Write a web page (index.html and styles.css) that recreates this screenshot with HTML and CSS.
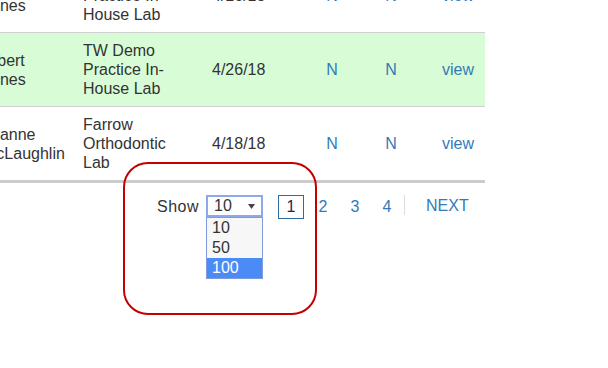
FILE: index.html
```html
<!DOCTYPE html>
<html>
<head>
<meta charset="utf-8">
<link rel="stylesheet" href="styles.css">
</head>
<body>
<div class="page">
  <div class="table-wrap">
    <table class="orders">
      <colgroup>
        <col class="w1"><col class="w2"><col class="w3"><col class="w4"><col class="w5"><col class="w6">
      </colgroup>
      <tr>
        <td class="name">Sarah Jones</td>
        <td class="lab">TW Demo Practice In-House Lab</td>
        <td class="date">4/16/18</td>
        <td class="flag">N</td>
        <td class="flag">N</td>
        <td class="link">view</td>
      </tr>
      <tr class="hl">
        <td class="name">Albert Jones</td>
        <td class="lab">TW Demo Practice In-House Lab</td>
        <td class="date">4/26/18</td>
        <td class="flag">N</td>
        <td class="flag">N</td>
        <td class="link">view</td>
      </tr>
      <tr class="last">
        <td class="name">Joanne McLaughlin</td>
        <td class="lab">Farrow Orthodontic Lab</td>
        <td class="date">4/18/18</td>
        <td class="flag">N</td>
        <td class="flag">N</td>
        <td class="link">view</td>
      </tr>
    </table>
  </div>

  <div class="pager">
    <span class="show">Show</span>
    <div class="select">
      <span class="sel-val">10</span>
      <svg class="arrow" width="7" height="5" viewBox="0 0 7 5"><polygon points="0,0 7,0 3.5,5" fill="#444"/></svg>
      <div class="options">
        <div class="opt">10</div>
        <div class="opt">50</div>
        <div class="opt active">100</div>
      </div>
    </div>
    <span class="pg current">1</span>
    <span class="pg">2</span>
    <span class="pg">3</span>
    <span class="pg">4</span>
    <span class="sep"></span>
    <span class="next">NEXT</span>
  </div>

  <div class="annot"></div>
</div>
</body>
</html>
```

FILE: styles.css
```css
html, body {
  margin: 0;
  padding: 0;
  background: #ffffff;
}
body {
  font-family: "Liberation Sans", Arial, sans-serif;
  font-size: 16px;
  color: #333333;
}
.page {
  display: flow-root;
  position: relative;
  width: 608px;
  height: 368px;
}
.table-wrap {
  margin: -41px 0 0 -25px;
  width: 510px;
}
.orders {
  width: 510px;
  table-layout: fixed;
  border-collapse: separate;
  border-spacing: 0;
}
.w1 { width: 100px; }
.w2 { width: 129px; }
.w3 { width: 96px; }
.w4 { width: 64px; }
.w5 { width: 54px; }
.w6 { width: 67px; }
.orders td {
  padding: 8px;
  line-height: 19px;
  vertical-align: middle;
  border-bottom: 1px solid #d0d0d0;
  color: #333333;
}
.orders td.lab { padding-right: 16px; }
.orders td.flag {
  text-align: center;
  color: #337ab7;
  padding-left: 0;
  padding-right: 0;
}
.orders td.link {
  color: #337ab7;
  text-align: center;
  padding-left: 21px;
}
.orders tr.hl td { background: #d8fdd6; }
.orders tr.last td { border-bottom: 3px solid #cccccc; }

.pager {
  display: flex;
  align-items: flex-start;
  margin-top: 12px;
  padding-left: 157px;
  height: 24px;
  line-height: 24px;
}
.show {
  width: 49px;
  color: #333333;
  letter-spacing: 0.5px;
}
.select {
  position: relative;
  box-sizing: border-box;
  width: 57px;
  height: 22px;
  border: 2px solid #8ea9ea;
  background: #fff;
  margin-right: 15px;
  display: flex;
  align-items: center;
  line-height: 18px;
  color: #333;
}
.sel-val { padding-left: 6px; width: 34px; }
.arrow { margin-top: 1px; }
.options {
  position: absolute;
  left: -2px;
  top: 20px;
  width: 57px;
  box-sizing: border-box;
  border: 1px solid #7f9bdc;
  background: #f7f7f7;
}
.opt {
  height: 20px;
  line-height: 20px;
  padding-left: 5px;
  color: #333;
}
.opt.active {
  background: #4a8bf6;
  color: #ffffff;
}
.pg {
  box-sizing: border-box;
  width: 26px;
  height: 24px;
  line-height: 22px;
  text-align: center;
  color: #337ab7;
  margin-right: 6px;
  border: 1px solid transparent;
}
.pg.current {
  border-color: #2e6da4;
  color: #162d4a;
}
.sep {
  width: 1px;
  height: 20px;
  background: #dddddd;
  margin-left: -2px;
  margin-right: 21px;
}
.next {
  color: #337ab7;
  line-height: 22px;
}
.annot {
  position: absolute;
  left: 123px;
  top: 162px;
  width: 194px;
  height: 153px;
  box-sizing: border-box;
  border: 2px solid #c40000;
  border-radius: 25px;
  pointer-events: none;
}
```
